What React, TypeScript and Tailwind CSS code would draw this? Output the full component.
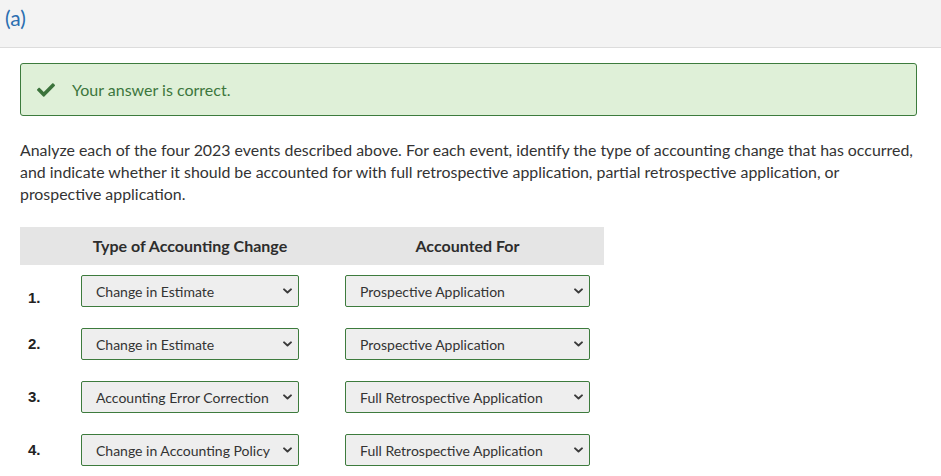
import React from 'react';

const rows = [
  { n: '1.', type: 'Change in Estimate', acc: 'Prospective Application' },
  { n: '2.', type: 'Change in Estimate', acc: 'Prospective Application' },
  { n: '3.', type: 'Accounting Error Correction', acc: 'Full Retrospective Application' },
  { n: '4.', type: 'Change in Accounting Policy', acc: 'Full Retrospective Application' },
];

function Chevron() {
  return (
    <svg viewBox="0 0 10 6" className="w-[9px] h-[6px]" fill="none">
      <path d="M1.2 1.2l3.8 3.4 3.8-3.4" stroke="#3a3a3a" strokeWidth="2.2" strokeLinecap="round" strokeLinejoin="round" />
    </svg>
  );
}

function FakeSelect({ value, width }: { value: string; width: string }) {
  return (
    <div
      className={`${width} h-[32px] flex items-center justify-between pl-[14px] pr-[6px] bg-[#eeeeee] border border-[#3d7b3d] rounded-[2px] text-[14px] text-[#333]`}
    >
      <span className="whitespace-nowrap">{value}</span>
      <Chevron />
    </div>
  );
}

export default function App() {
  return (
    <div className="w-[941px] h-[476px] bg-white overflow-hidden font-['Lato','Open_Sans',sans-serif] text-[#333]">
      <div className="h-[48px] bg-[#f3f3f3] border-b border-[#dcdcdc] px-[5px] pt-[5px]">
        <span className="text-[21px] text-[#2a6eb0] leading-[26px]">(a)</span>
      </div>

      <div className="px-[20px] pt-[15px] pr-[24px]">
        <div className="h-[53px] flex items-center bg-[#dff0d8] border border-[#3d7b3d] rounded-[3px] pl-[16px]">
          <svg viewBox="0 0 512 512" className="w-[18px] h-[18px]" fill="#3b733b">
            <path d="M173.898 439.404l-166.4-166.4c-9.997-9.997-9.997-26.206 0-36.204l36.203-36.204c9.997-9.998 26.207-9.998 36.204 0L192 312.69 432.095 72.596c9.997-9.997 26.207-9.997 36.204 0l36.203 36.204c9.997 9.997 9.997 26.206 0 36.204l-294.4 294.401c-9.998 9.997-26.207 9.997-36.204-.001z" />
          </svg>
          <span className="ml-[17px] text-[16px] text-[#3c763d]">Your answer is correct.</span>
        </div>

        <p className="mt-[23px] text-[15.9px] leading-[22px] text-[#333]">
          Analyze each of the four 2023 events described above. For each event, identify the type of accounting change that has occurred,
          and indicate whether it should be accounted for with full retrospective application, partial retrospective application, or
          prospective application.
        </p>

        <div className="mt-[22px] w-[584px]">
          <div className="h-[38px] bg-[#e5e5e5] grid grid-cols-[61px_218px_46px_245px] items-center text-[16px] font-bold text-[#2d2d2d]">
            <div />
            <div className="text-center whitespace-nowrap">Type of Accounting Change</div>
            <div />
            <div className="text-center">Accounted For</div>
          </div>

          <div className="pt-[10px] flex flex-col gap-[21px]">
            {rows.map((r, i) => (
              <div key={r.n} className="grid grid-cols-[61px_218px_46px_245px] items-center">
                <div
                  className={`pl-[8px] font-['Liberation_Sans',Arial,sans-serif] font-bold text-[15px] text-[#222] ${
                    i === 0 ? 'translate-y-[7px]' : ''
                  }`}
                >
                  {r.n}
                </div>
                <FakeSelect value={r.type} width="w-[218px]" />
                <div />
                <FakeSelect value={r.acc} width="w-[245px]" />
              </div>
            ))}
          </div>
        </div>
      </div>
    </div>
  );
}
